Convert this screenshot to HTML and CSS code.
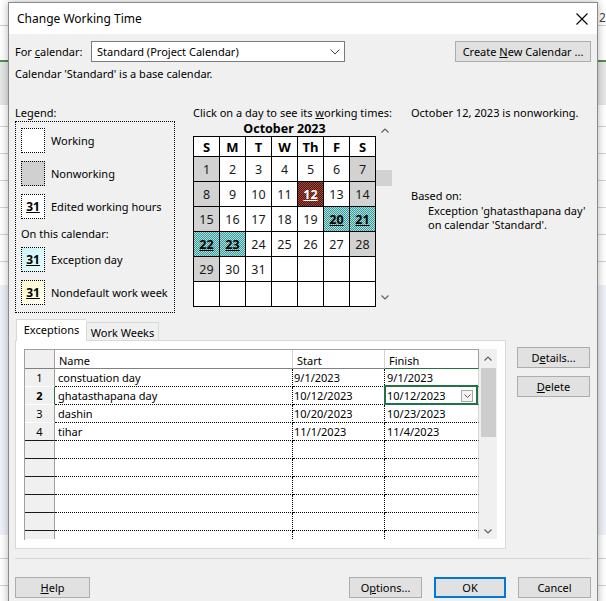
FILE: index.html
```html
<!DOCTYPE html>
<html>
<head>
<meta charset="utf-8">
<title>Change Working Time</title>
<link rel="stylesheet" href="styles.css">
</head>
<body>
<div class="app-bg"><span class="bg-label">24</span></div>
<div class="dialog">
  <div class="titlebar">
    <span class="title">Change Working Time</span>
    <svg class="close" width="12" height="12" viewBox="0 0 12 12"><path d="M0.5 0.5 L11.5 11.5 M11.5 0.5 L0.5 11.5" stroke="#000" stroke-width="1.1" fill="none"/></svg>
  </div>
  <div class="content">
    <div class="row-cal">
      <span class="lbl-cal">For <u>c</u>alendar:</span>
      <div class="combo">
        <span class="combo-text">Standard (Project Calendar)</span>
        <svg width="10" height="6" viewBox="0 0 10 6"><path d="M0.5 0.5 L5 5 L9.5 0.5" stroke="#444" stroke-width="1" fill="none"/></svg>
      </div>
      <div class="btn btn-create"><span>Create <u>N</u>ew Calendar ...</span></div>
    </div>
    <div class="base-note">Calendar 'Standard' is a base calendar.</div>

    <div class="main">
      <div class="legend-col">
        <div class="cap">Legend:</div>
        <div class="legend-box">
          <div class="leg-item"><span class="sw"></span><span>Working</span></div>
          <div class="leg-item"><span class="sw sw-non"></span><span>Nonworking</span></div>
          <div class="leg-item"><span class="sw">31</span><span>Edited working hours</span></div>
          <div class="leg-sub">On this calendar:</div>
          <div class="leg-item"><span class="sw sw-exc">31</span><span>Exception day</span></div>
          <div class="leg-item"><span class="sw sw-nd">31</span><span>Nondefault work week</span></div>
        </div>
      </div>

      <div class="cal-col">
        <div class="cap">Click on a day to see its <u>w</u>orking times:</div>
        <div class="cal-wrap">
          <div class="cal">
            <div class="month">October 2023</div>
            <div class="grid">
              <div class="hd">S</div><div class="hd">M</div><div class="hd">T</div><div class="hd">W</div><div class="hd">Th</div><div class="hd">F</div><div class="hd">S</div>
              <div class="d nw">1</div><div class="d">2</div><div class="d">3</div><div class="d">4</div><div class="d">5</div><div class="d">6</div><div class="d nw">7</div>
              <div class="d nw">8</div><div class="d">9</div><div class="d">10</div><div class="d">11</div><div class="d sel"><u>12</u></div><div class="d">13</div><div class="d nw">14</div>
              <div class="d nw">15</div><div class="d">16</div><div class="d">17</div><div class="d">18</div><div class="d">19</div><div class="d ex"><u>20</u></div><div class="d ex"><u>21</u></div>
              <div class="d ex"><u>22</u></div><div class="d ex"><u>23</u></div><div class="d">24</div><div class="d">25</div><div class="d">26</div><div class="d">27</div><div class="d nw">28</div>
              <div class="d nw">29</div><div class="d">30</div><div class="d">31</div><div class="d"></div><div class="d"></div><div class="d"></div><div class="d"></div>
              <div class="d"></div><div class="d"></div><div class="d"></div><div class="d"></div><div class="d"></div><div class="d"></div><div class="d"></div>
            </div>
          </div>
          <div class="cal-scroll">
            <div class="arrow"><svg width="8" height="5" viewBox="0 0 8 5"><path d="M0.5 4.5 L4 1 L7.5 4.5" stroke="#606060" stroke-width="1.2" fill="none"/></svg></div>
            <div class="cal-thumb"></div>
            <div class="fill"></div>
            <div class="arrow"><svg width="8" height="5" viewBox="0 0 8 5"><path d="M0.5 0.5 L4 4 L7.5 0.5" stroke="#606060" stroke-width="1.2" fill="none"/></svg></div>
          </div>
        </div>
      </div>

      <div class="info-col">
        <div class="cap">October 12, 2023 is nonworking.</div>
        <div class="based">Based on:</div>
        <div class="based-detail">
          <div class="bd-line">Exception 'ghatasthapana day'</div>
          <div class="bd-line">on calendar 'Standard'.</div>
        </div>
      </div>
    </div>

    <div class="lower">
      <div class="tabs-area">
        <div class="tabs">
          <div class="tab active">Exceptions</div>
          <div class="tab">Work Weeks</div>
        </div>
        <div class="panel">
          <div class="table">
            <div class="tgrid thead">
              <div class="th corner"></div>
              <div class="th">Name</div>
              <div class="th">Start</div>
              <div class="th fin">Finish</div>
            </div>
            <div class="tgrid tbody">
              <div class="rh lt">1</div><div class="td nm">constuation day</div><div class="td st">9/1/2023</div><div class="td fn">9/1/2023</div>
              <div class="rh lt cur">2</div><div class="td nm">ghatasthapana day</div><div class="td st">10/12/2023</div><div class="td fn sel"><span>10/12/2023</span><span class="dd"><svg width="7" height="4" viewBox="0 0 7 4"><path d="M0.5 0.5 L3.5 3.5 L6.5 0.5" stroke="#555" stroke-width="1" fill="none"/></svg></span></div>
              <div class="rh lt">3</div><div class="td nm">dashin</div><div class="td st">10/20/2023</div><div class="td fn">10/23/2023</div>
              <div class="rh">4</div><div class="td nm">tihar</div><div class="td st">11/1/2023</div><div class="td fn">11/4/2023</div>
              <div class="rh"></div><div class="td nm"></div><div class="td st"></div><div class="td fn"></div>
              <div class="rh"></div><div class="td nm"></div><div class="td st"></div><div class="td fn"></div>
              <div class="rh"></div><div class="td nm"></div><div class="td st"></div><div class="td fn"></div>
              <div class="rh"></div><div class="td nm"></div><div class="td st"></div><div class="td fn"></div>
              <div class="rh"></div><div class="td nm"></div><div class="td st"></div><div class="td fn"></div>
              <div class="rh"></div><div class="td nm"></div><div class="td st"></div><div class="td fn"></div>
            </div>
          </div>
          <div class="tscroll">
            <div class="tarrow up"><svg width="8" height="5" viewBox="0 0 8 5"><path d="M0.5 4.5 L4 1 L7.5 4.5" stroke="#606060" stroke-width="1.2" fill="none"/></svg></div>
            <div class="tthumb"></div>
            <div class="fill"></div>
            <div class="tarrow down"><svg width="8" height="5" viewBox="0 0 8 5"><path d="M0.5 0.5 L4 4 L7.5 0.5" stroke="#606060" stroke-width="1.2" fill="none"/></svg></div>
          </div>
        </div>
      </div>
      <div class="side">
        <div class="btn btn-side"><span>D<u>e</u>tails...</span></div>
        <div class="btn btn-side"><span><u>D</u>elete</span></div>
      </div>
    </div>

    <div class="sep"></div>

    <div class="footer">
      <div class="btn btn-help"><span><u>H</u>elp</span></div>
      <div class="btn btn-opt"><span>O<u>p</u>tions...</span></div>
      <div class="btn btn-ok"><span>OK</span></div>
      <div class="btn btn-cancel"><span>Cancel</span></div>
    </div>
  </div>
</div>
</body>
</html>
```

FILE: styles.css
```css
* { box-sizing: border-box; }
html, body { margin: 0; padding: 0; }
body {
  width: 606px;
  height: 601px;
  overflow: hidden;
  position: relative;
  font-family: "Noto Sans", "Segoe UI", sans-serif;
  font-size: 11px;
  color: #000;
  background: #fff;
}

/* backdrop application */
.app-bg {
  position: absolute;
  inset: 0;
  background:
    linear-gradient(#cfcfcf, #cfcfcf) 0 25px / 100% 1px no-repeat,
    linear-gradient(#4e8f4e, #4e8f4e) 0 60px / 100% 2px no-repeat,
    linear-gradient(#e6e6e6, #e6e6e6) 0 62px / 100% 43px no-repeat,
    linear-gradient(#eef1f7, #eef1f7) 0 285px / 100% 250px no-repeat,
    repeating-linear-gradient(to bottom, transparent 0 26px, #d2d2d2 26px 27px) 0 100px / 100% 501px no-repeat,
    #fff;
}
.bg-label {
  position: absolute;
  left: 599px;
  top: 9px;
  font-size: 12px;
  color: #444;
}

.dialog {
  position: absolute;
  left: 8px;
  top: 2px;
  width: 590px;
  height: 620px;
  background: #f0f0f0;
  border: 1px solid #8a8a8a;
  box-shadow: 0 0 8px rgba(0, 0, 0, 0.3);
}

.titlebar {
  height: 31px;
  background: #fff;
  display: flex;
  align-items: center;
  padding: 0 9px 0 8px;
}
.title { font-size: 12px; }
.close { margin-left: auto; }

.content { padding: 7px 6px 0 6px; }

.row-cal { display: flex; align-items: center; height: 21px; }
.lbl-cal { width: 76px; }
.combo {
  width: 254px;
  height: 21px;
  background: #fff;
  border: 1px solid #7a7a7a;
  display: flex;
  align-items: center;
  padding: 0 4px 0 5px;
}
.combo-text { flex: 1; }

.btn {
  height: 21px;
  background: #e1e1e1;
  border: 1px solid #adadad;
  display: flex;
  align-items: center;
  justify-content: center;
  white-space: nowrap;
}
.btn-create { margin-left: auto; width: 136px; }

.base-note { margin-top: 4px; line-height: 15px; }

.main { display: flex; margin-top: 24px; }
.cap { line-height: 15px; white-space: nowrap; }

.legend-col { width: 160px; margin-right: 18px; }
.legend-box {
  margin-top: 1px;
  height: 192px;
  border: 1px dotted #000;
  padding: 6px 0 0 5px;
}
.leg-item { display: flex; align-items: center; height: 25px; margin-bottom: 8px; white-space: nowrap; }
.leg-sub { line-height: 14px; margin-bottom: 6px; }
.sw {
  width: 24px;
  height: 25px;
  border: 1px dotted #000;
  margin-right: 6px;
  background: #fff;
  display: flex;
  align-items: center;
  justify-content: center;
  font-weight: bold;
  font-size: 12px;
  text-decoration: underline;
  flex: none;
}
.sw-non { background: #d0d0d0; }
.sw-exc { background: linear-gradient(135deg, #c6f3f3, #ecfbfb); }
.sw-nd { background: linear-gradient(135deg, #fdf8cc, #fffdf0); }

.cal-col { width: 218px; }
.cal-wrap { display: flex; }
.cal { width: 183px; }
.month {
  height: 16px;
  line-height: 15px;
  padding-top: 1px;
  text-align: center;
  font-weight: bold;
  font-size: 12.5px;
}
.grid {
  display: grid;
  grid-template-columns: repeat(7, 25px);
  grid-template-rows: 19px repeat(6, 24px);
  gap: 1px;
  background: #000;
  border: 1px solid #000;
}
.hd, .d {
  background: #fff;
  display: flex;
  align-items: center;
  justify-content: center;
}
.hd { font-weight: bold; font-size: 13px; }
.d { font-size: 12.5px; color: #1a1a1a; }
.d.nw { background: #d2d2d2; }
.d.ex {
  background: repeating-conic-gradient(#3f9a9a 0 25%, #a9dede 0 50%) 0 0 / 2px 2px;
  font-weight: bold;
  color: #000;
}
.d.sel {
  background: repeating-conic-gradient(#4a1610 0 25%, #a8483b 0 50%) 0 0 / 2px 2px;
  font-weight: bold;
  color: #fff;
}

.cal-scroll { width: 17px; display: flex; flex-direction: column; }
.arrow { height: 20px; display: flex; align-items: center; justify-content: center; }
.cal-thumb { width: 16px; height: 16px; margin-top: 30px; background: #d2d2d2; }
.fill { flex: 1; }

.info-col { flex: 1; }
.based { margin-top: 69px; line-height: 14px; }
.based-detail { margin: 1px 0 0 17px; }
.bd-line { line-height: 14px; height: 14px; white-space: nowrap; }

.lower { display: flex; align-items: flex-start; margin-top: 6px; }
.tabs-area { width: 491px; }
.tabs { display: flex; align-items: flex-end; height: 21px; padding-left: 1px; position: relative; z-index: 1; }
.tab {
  height: 18px;
  width: 73px;
  border: 1px solid #d9d9d9;
  border-bottom: none;
  background: #f0f0f0;
  display: flex;
  align-items: center;
  justify-content: center;
  padding-top: 1px;
}
.tab.active {
  width: 70px;
  height: 22px;
  background: #fff;
  margin-bottom: -1px;
  border-right: none;
  padding-top: 0;
  padding-bottom: 2px;
}
.panel {
  height: 209px;
  border: 1px solid #d9d9d9;
  background: #fff;
  padding: 8px;
  display: flex;
}

.table { width: 455px; border-left: 1px solid #a0a0a0; }
.tgrid { display: grid; grid-template-columns: 30px 238px 92px 94px; }
.thead { border-top: 1px solid #a0a0a0; }
.th {
  height: 19px;
  border-bottom: 1px solid #808080;
  border-right: 1px solid #d4d4d4;
  background: #fff;
  padding: 3px 0 0 4px;
  line-height: 15px;
}
.th.corner { background: #f0f0f0; border-right-color: #a0a0a0; }
.th.fin { border-bottom-color: #217346; border-right-color: #a0a0a0; }
.tbody { grid-auto-rows: 18px; height: 170px; overflow: hidden; }
.rh {
  background: #f0f0f0;
  border-right: 1px solid #a0a0a0;
  border-bottom: 1px solid #1a1a1a;
  text-align: center;
  line-height: 17px;
}
.rh.lt { border-bottom-color: #fff; }
.rh.cur { border-right-color: #217346; font-weight: bold; }
.td {
  background: #fff;
  border-right: 1px dotted #000;
  border-bottom: 1px dotted #000;
  line-height: 17px;
  white-space: nowrap;
  overflow: hidden;
}
.td.nm { padding-left: 3px; }
.td.st { padding-left: 1px; }
.td.fn { padding-left: 2px; border-right: 1px solid #d8d8d8; }
.td.sel { position: relative; display: flex; align-items: center; overflow: visible; }
.td.sel::after {
  content: "";
  position: absolute;
  left: -1px;
  top: -2px;
  right: 0;
  bottom: -1px;
  border: 2px solid #217346;
}
.dd {
  margin-left: auto;
  margin-right: 5px;
  width: 12px;
  height: 12px;
  border: 1px solid #a8a8a8;
  background: #f4f4f4;
  display: flex;
  align-items: center;
  justify-content: center;
}

.tscroll { width: 18px; height: 190px; background: #f0f0f0; display: flex; flex-direction: column; align-items: center; }
.tarrow { height: 19px; width: 100%; display: flex; align-items: center; justify-content: center; }
.tarrow.down { height: 16px; }
.tthumb { width: 15px; height: 69px; background: #cdcdcd; }

.side { margin-left: 11px; margin-top: 28px; display: flex; flex-direction: column; gap: 8px; }
.btn-side { width: 73px; }

.sep { margin-top: 9px; height: 1px; background: #d9d9d9; }

.footer { display: flex; gap: 12px; margin-top: 18px; }
.btn-help { width: 75px; }
.btn-opt { width: 73px; margin-left: auto; }
.btn-ok { width: 72px; border: 2px solid #0078d7; }
.btn-cancel { width: 73px; }
```
